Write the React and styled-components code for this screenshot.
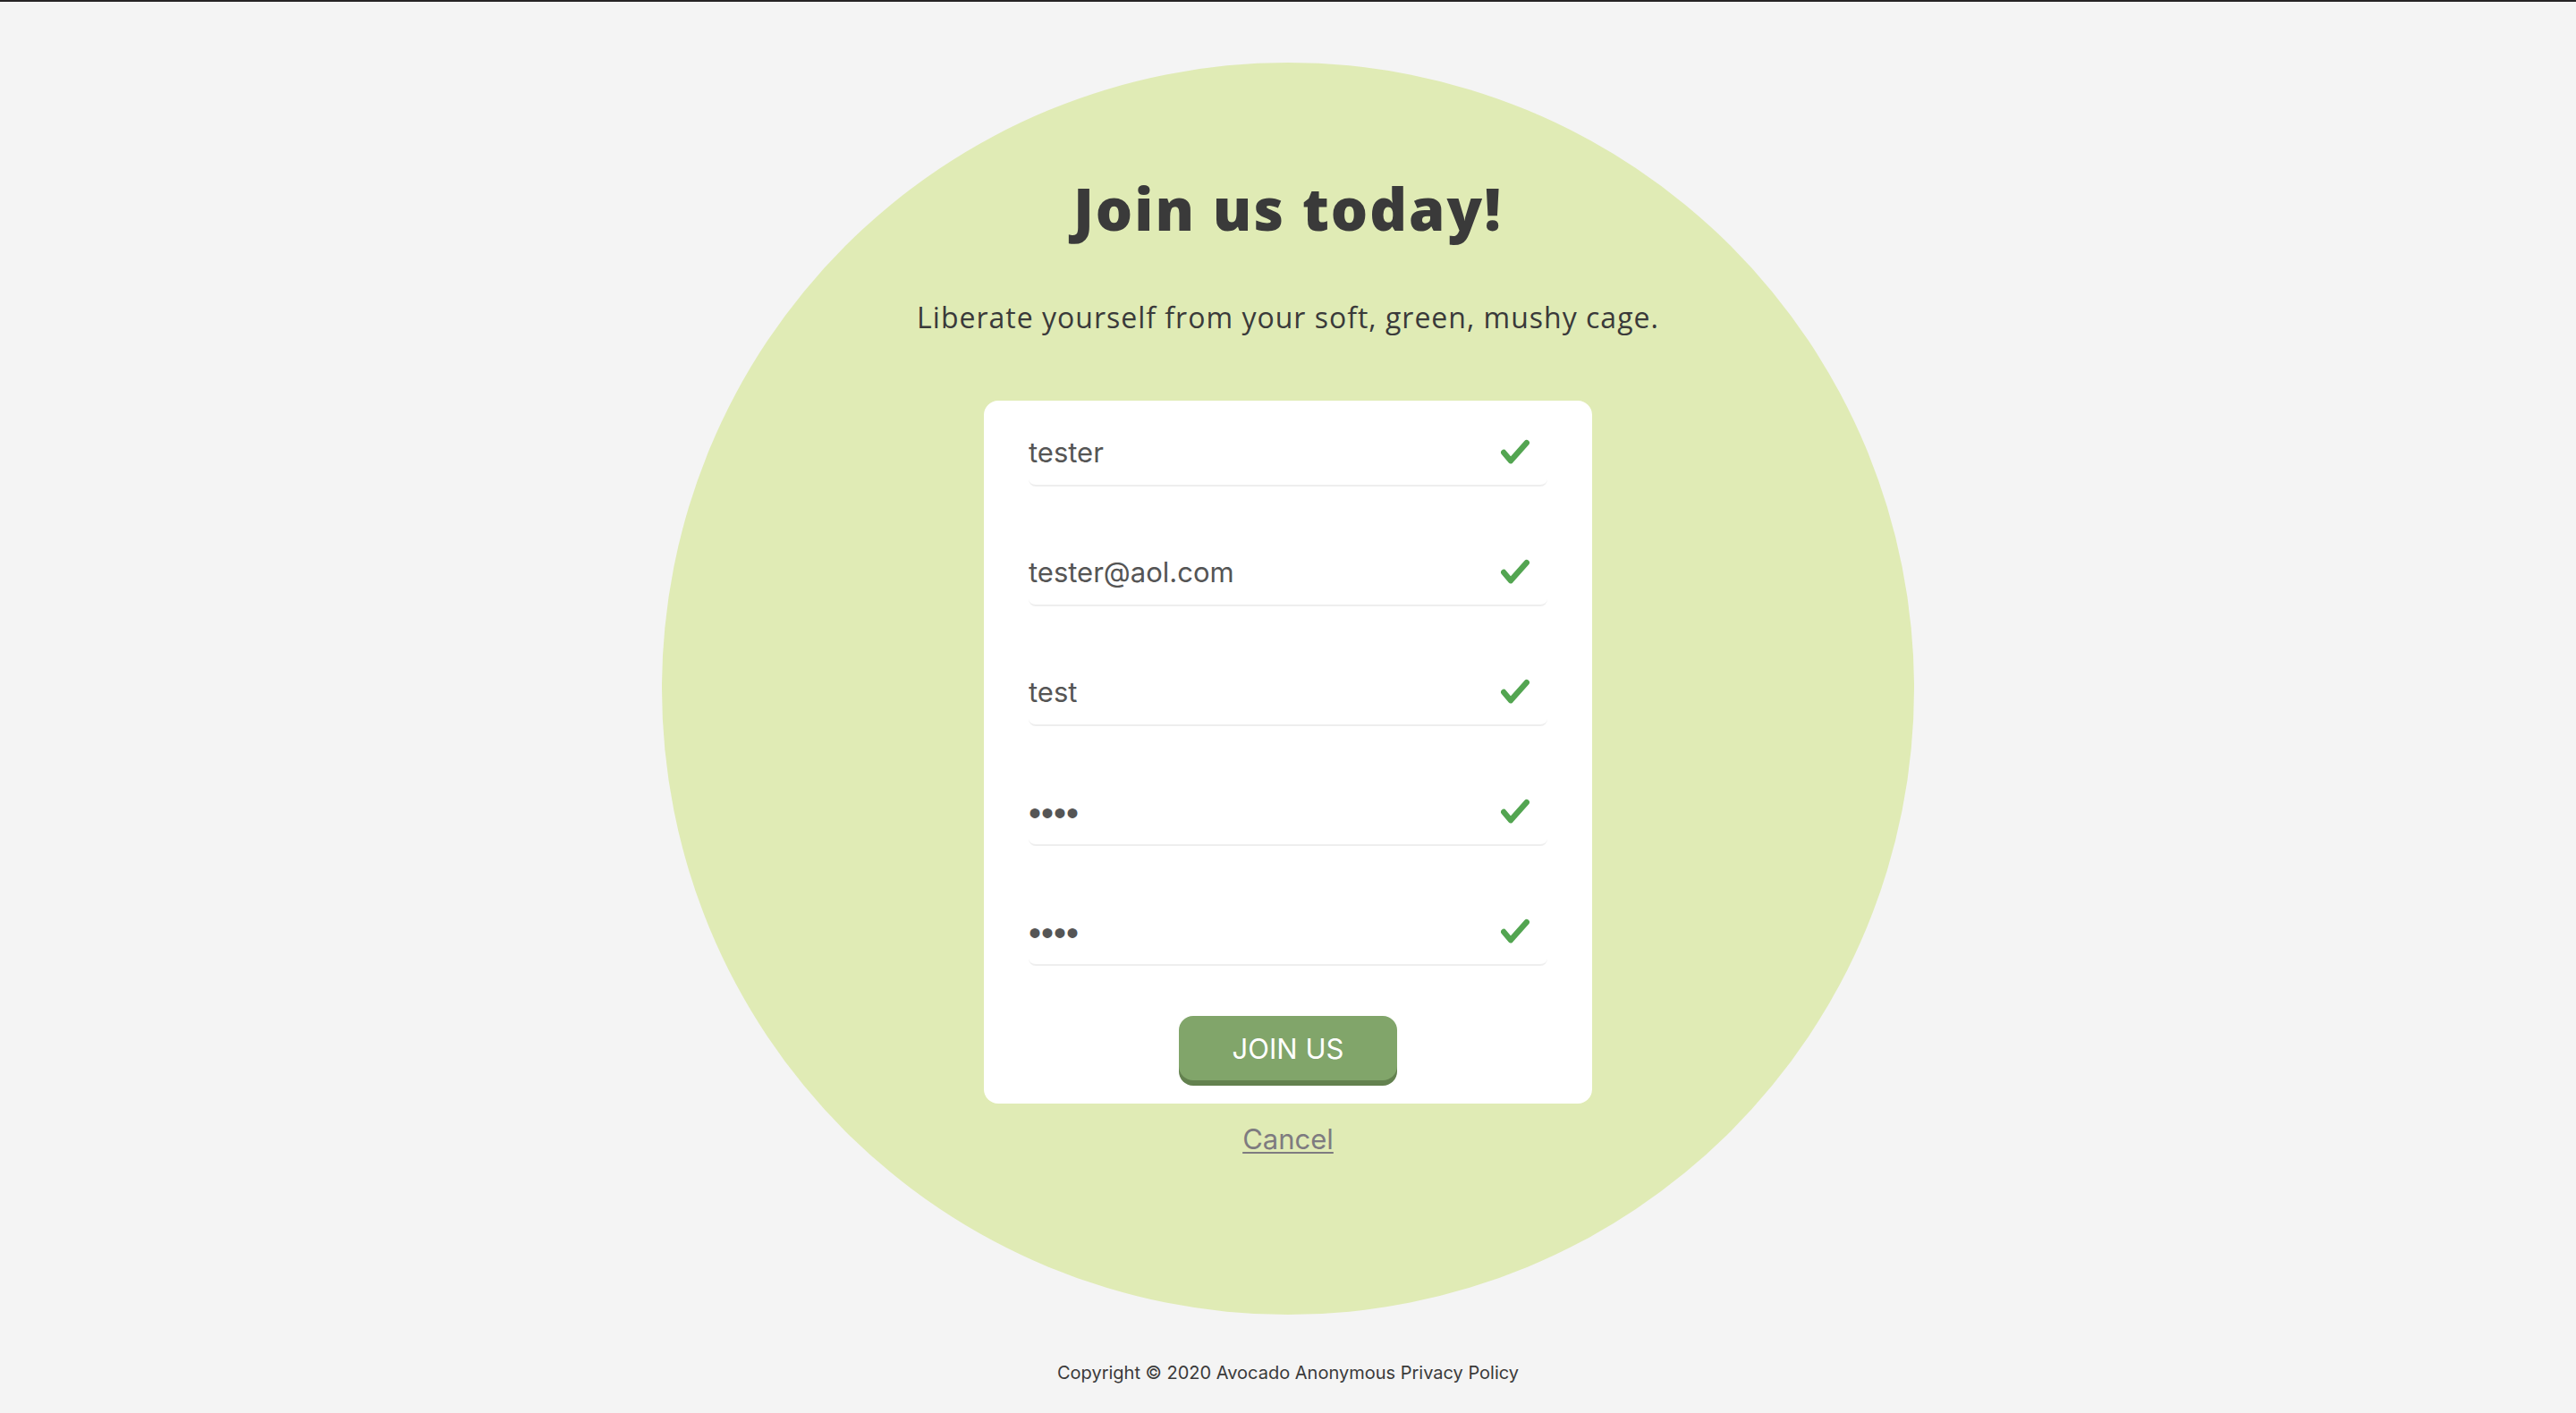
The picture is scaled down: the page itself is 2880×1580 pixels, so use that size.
import React from "react";
import styled, { createGlobalStyle } from "styled-components";

const GlobalStyle = createGlobalStyle`
  *, *::before, *::after {
    box-sizing: border-box;
  }
  body {
    margin: 0;
    background: #f4f4f4;
    color: #3a3a3a;
    font-family: Inter, "Liberation Sans", sans-serif;
  }
`;

const Page = styled.div`
  min-height: 100vh;
  border-top: 2px solid #262425;
  display: flex;
  flex-direction: column;
  align-items: center;
`;

const Circle = styled.main`
  width: 1400px;
  max-width: 100%;
  aspect-ratio: 1;
  margin-top: 68px;
  padding: 121px 20px 0;
  border-radius: 50%;
  background: #e0ebb5;
  display: flex;
  flex-direction: column;
  align-items: center;
`;

const Title = styled.h1`
  margin: 0;
  font-family: "Open Sans", Lato, sans-serif;
  font-size: 65px;
  font-weight: 800;
  line-height: 84px;
  letter-spacing: 2px;
`;

const Tagline = styled.p`
  margin: 56px 0 0;
  font-family: "Open Sans", "Noto Sans", sans-serif;
  font-size: 32px;
  line-height: 48px;
  letter-spacing: 1px;
`;

const Card = styled.form`
  width: 680px;
  max-width: 100%;
  margin-top: 69px;
  padding: 20px 50px 26px;
  border-radius: 16px;
  background: #fff;
  display: flex;
  flex-direction: column;
  align-items: center;
  gap: 56px;
`;

const Fields = styled.div`
  width: 100%;
  display: grid;
  gap: 58px;
`;

const Field = styled.label`
  height: 76px;
  padding-right: 20px;
  border-bottom: 2px solid #eee;
  border-radius: 8px;
  display: flex;
  align-items: center;
`;

const Input = styled.input`
  flex: 1;
  min-width: 0;
  height: 100%;
  padding: 0;
  border: 0;
  outline: 0;
  background: transparent;
  color: #555;
  font: inherit;
  font-size: 31px;

  &[type="password"] {
    padding-top: 4px;
    font-family: "Liberation Sans", sans-serif;
    font-size: 40px;
  }
`;

const CheckIcon = styled.svg`
  width: 32px;
  height: 28px;
  fill: none;
  stroke: #53a551;
  stroke-width: 6.4;
  stroke-linecap: round;
  stroke-linejoin: round;
`;

const JoinButton = styled.button`
  width: 244px;
  height: 72px;
  padding: 0;
  border: 0;
  border-radius: 16px;
  background: #81a56a;
  box-shadow: 0 6px 0 #63814f;
  color: #fff;
  font: inherit;
  font-size: 31px;
`;

const CancelLink = styled.a`
  margin-top: 20px;
  color: #7e7b80;
  font-size: 31px;
  line-height: 40px;
  text-underline-offset: 3px;
  text-decoration-thickness: 2px;
`;

const Footer = styled.footer`
  margin-top: 50px;
  font-size: 20px;
  line-height: 30px;
`;

const PolicyLink = styled.a`
  color: inherit;
  text-decoration: none;
`;

const fields = [
  { name: "username", label: "Username", type: "text", value: "tester" },
  { name: "email", label: "Email", type: "email", value: "tester@aol.com" },
  { name: "display", label: "Display name", type: "text", value: "test" },
  { name: "password", label: "Password", type: "password", value: "test" },
  { name: "confirm", label: "Confirm password", type: "password", value: "test" },
];

export default function App() {
  return (
    <>
      <GlobalStyle />
      <Page>
        <Circle>
          <Title>Join us today!</Title>
          <Tagline>Liberate yourself from your soft, green, mushy cage.</Tagline>
          <Card onSubmit={(event) => event.preventDefault()}>
            <Fields>
              {fields.map((field) => (
                <Field key={field.name}>
                  <Input
                    name={field.name}
                    type={field.type}
                    defaultValue={field.value}
                    aria-label={field.label}
                  />
                  <CheckIcon viewBox="0 0 32 28" aria-hidden="true">
                    <path d="M3.2 15L11 24.2L28.8 4.2" />
                  </CheckIcon>
                </Field>
              ))}
            </Fields>
            <JoinButton type="submit">JOIN US</JoinButton>
          </Card>
          <CancelLink href="#cancel">Cancel</CancelLink>
        </Circle>
        <Footer>
          Copyright © 2020 Avocado Anonymous <PolicyLink href="#privacy">Privacy Policy</PolicyLink>
        </Footer>
      </Page>
    </>
  );
}
